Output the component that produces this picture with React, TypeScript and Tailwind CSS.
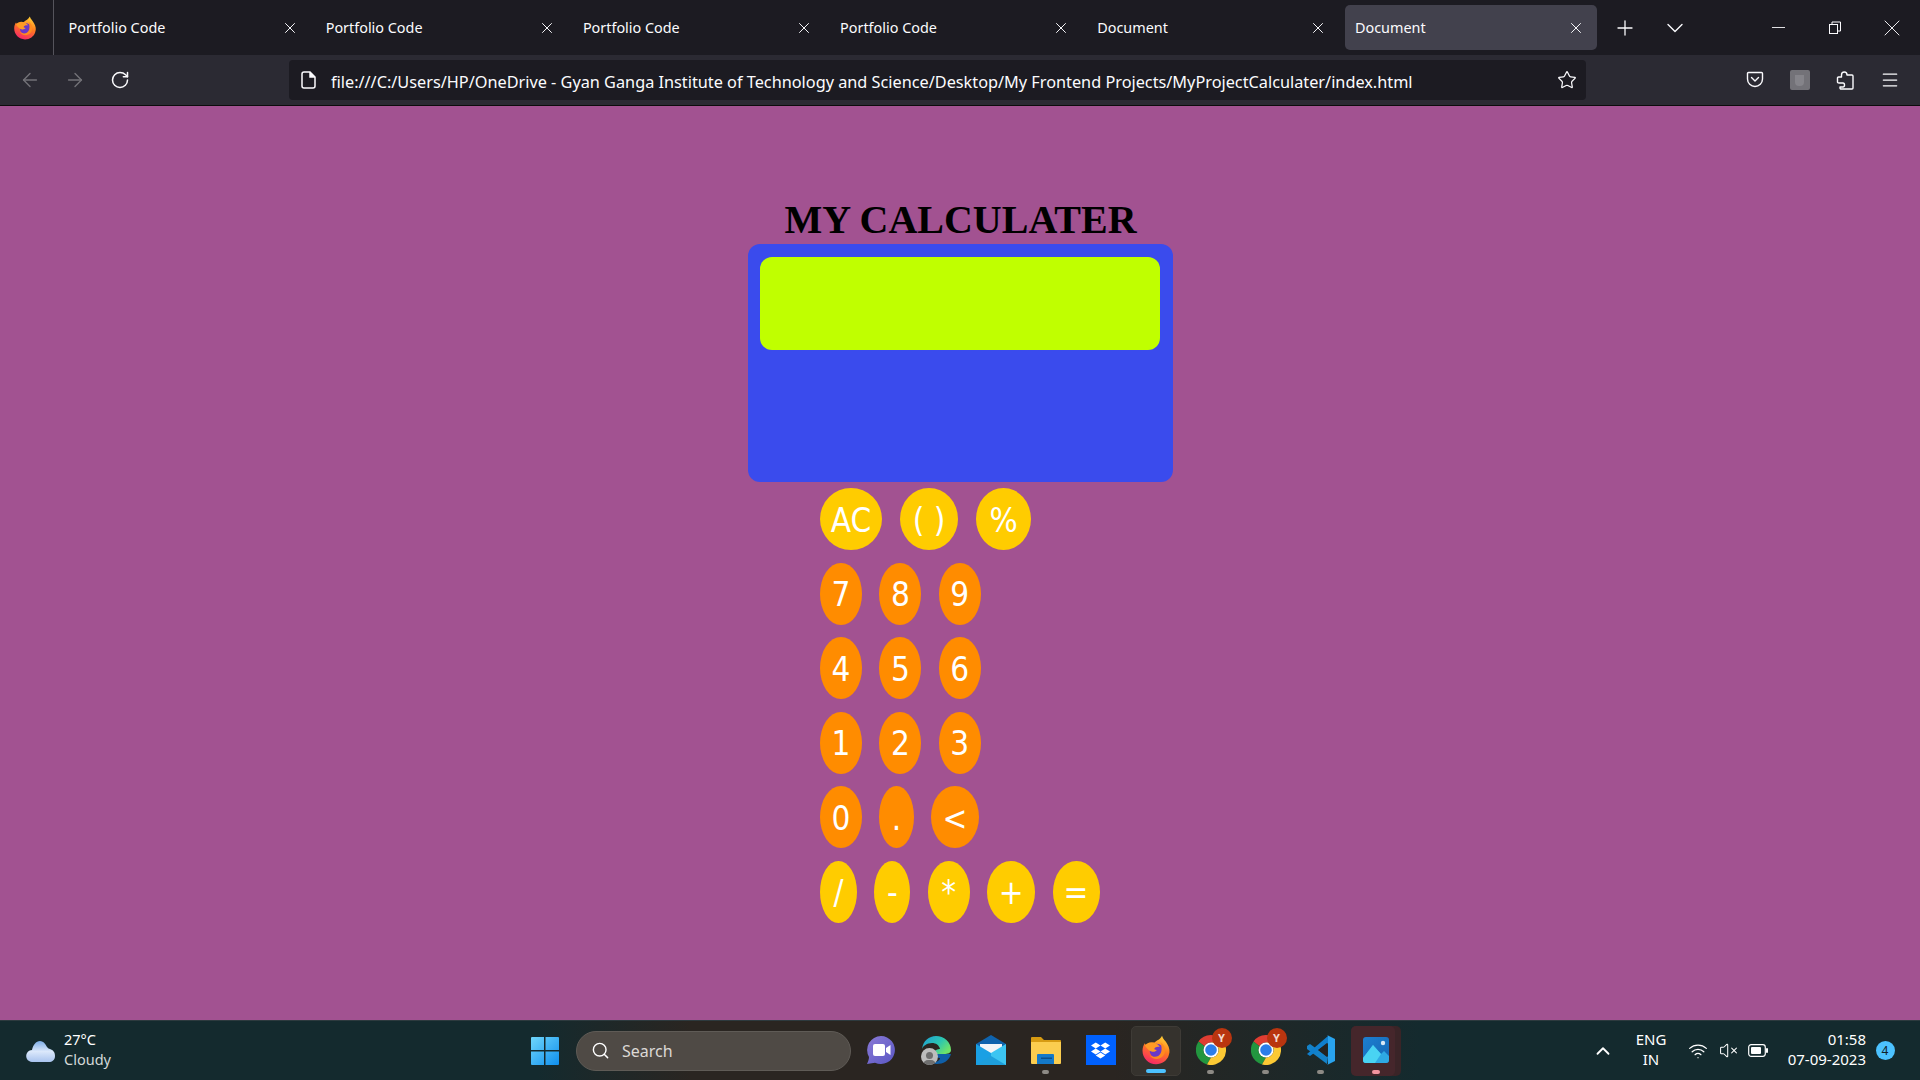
import { ArrowLeft, ArrowRight, ChevronDown, ChevronUp, Menu, Minus, Plus, RotateCw, Search, Star, Wifi, VolumeX, X } from "lucide-react";
import { FaDropbox } from "react-icons/fa";

const tabs = ["Portfolio Code", "Portfolio Code", "Portfolio Code", "Portfolio Code", "Document", "Document"];

const rows = [
  {
    keys: [
      { label: "AC", size: "w-[62px]" },
      { label: "( )", size: "w-[58px]" },
      { label: "%", size: "w-[55px]" },
    ],
    color: "bg-[#ffcc00]",
    gap: "gap-[18px]",
  },
  {
    keys: [
      { label: "7", size: "w-[42px]" },
      { label: "8", size: "w-[42px]" },
      { label: "9", size: "w-[42px]" },
    ],
    color: "bg-[#ff8c00]",
    gap: "gap-[17.4px]",
  },
  {
    keys: [
      { label: "4", size: "w-[42px]" },
      { label: "5", size: "w-[42px]" },
      { label: "6", size: "w-[42px]" },
    ],
    color: "bg-[#ff8c00]",
    gap: "gap-[17.4px]",
  },
  {
    keys: [
      { label: "1", size: "w-[42px]" },
      { label: "2", size: "w-[42px]" },
      { label: "3", size: "w-[42px]" },
    ],
    color: "bg-[#ff8c00]",
    gap: "gap-[17.4px]",
  },
  {
    keys: [
      { label: "0", size: "w-[42px]" },
      { label: ".", size: "w-[35px]" },
      { label: "<", size: "w-[48px]" },
    ],
    color: "bg-[#ff8c00]",
    gap: "gap-[17px]",
  },
  {
    keys: [
      { label: "/", size: "w-[37px]" },
      { label: "-", size: "w-[36px]" },
      { label: "*", size: "w-[42px]" },
      { label: "+", size: "w-[48px]" },
      { label: "=", size: "w-[47px]" },
    ],
    color: "bg-[#ffcc00]",
    gap: "gap-[17.4px]",
  },
];

function FirefoxLogo({ size }: { size: number }) {
  return (
    <svg width={size} height={size} viewBox="0 0 40 40">
      <defs>
        <linearGradient id={`ff${size}`} x1="0.7" y1="0" x2="0.3" y2="1">
          <stop offset="0" stopColor="#ffd035" />
          <stop offset="0.45" stopColor="#ff7a1f" />
          <stop offset="1" stopColor="#f5246a" />
        </linearGradient>
      </defs>
      <path d="M28 1c1 4 5 7 7 11 3 5 4 10 2 15-2 7-9 12-17 12C10 39 2 31 2 21c0-4 1-7 3-10 1 2 2 3 3 4 2-3 6-5 10-5 3-3 8-4 10-9z" fill={`url(#ff${size})`} />
      <circle cx="21" cy="21" r="9.5" fill="#6b38c9" />
      <path d="M5 14c3-4 9-6 14-3 3 1 5 3 6 5-3-1-6 0-7 2-1 1 1 2 3 2-1 2-4 3-7 2-4-1-6-4-9-8z" fill="#ff9a26" />
      <path d="M26 10c4 2 6 6 6 11 0 6-5 11-11 11-4 0-8-2-10-6 3 3 8 4 12 2 4-3 6-8 3-18z" fill="#ff8a1f" />
    </svg>
  );
}

function ChromeLogo() {
  return (
    <svg width="30" height="30" viewBox="0 0 30 30">
      <path d="M15 0a15 15 0 0 1 13 7.5H15a7.5 7.5 0 0 0-6.5 3.75L2.5 6.5A15 15 0 0 1 15 0z" fill="#df3d32" />
      <path d="M2.5 6.5l6 4.75A7.5 7.5 0 0 0 15 22.5L11 29.5A15 15 0 0 1 2.5 6.5z" fill="#22963f" />
      <path d="M28 7.5A15 15 0 0 1 11 29.5l4-7A7.5 7.5 0 0 0 21.5 11.25L15 7.5z" fill="#fcc934" />
      <circle cx="15" cy="15" r="7.5" fill="#fff" />
      <circle cx="15" cy="15" r="5.8" fill="#2b7de9" />
    </svg>
  );
}

function Chrome() {
  return (
    <div className="relative w-[30px] h-[30px]">
      <ChromeLogo />
      <div className="absolute -top-[7px] -right-[6px] w-[20px] h-[20px] rounded-full bg-[#b9350f] flex items-center justify-center text-[11px] font-bold text-[#f2d9cf]">
        Y
      </div>
    </div>
  );
}

function TaskSlot({ children, dot }: { children: React.ReactNode; dot?: boolean }) {
  return (
    <div className="relative w-[55px] h-[50px] flex items-center justify-center pb-[1px]">
      {children}
      {dot && <div className="absolute bottom-[2px] left-[24px] w-[7px] h-[4px] rounded-full bg-[#8d8a85]" />}
    </div>
  );
}

function WindowsLogo() {
  return (
    <svg width="30" height="30" viewBox="0 0 30 30">
      <defs>
        <linearGradient id="win" x1="0" y1="0" x2="1" y2="1">
          <stop offset="0" stopColor="#6fd6fb" />
          <stop offset="1" stopColor="#0f8fee" />
        </linearGradient>
      </defs>
      <path d="M1 2a1 1 0 0 1 1-1h12v13H1zM15.5 1H28a1 1 0 0 1 1 1v12H15.5zM1 15.5h13V29H2a1 1 0 0 1-1-1zM15.5 15.5H29V28a1 1 0 0 1-1 1H15.5z" fill="url(#win)" />
    </svg>
  );
}

function Cloud() {
  return (
    <svg width="31" height="24" viewBox="0 0 31 24">
      <defs>
        <linearGradient id="cloud" x1="0" y1="0" x2="0" y2="1">
          <stop offset="0" stopColor="#7eaee8" />
          <stop offset="0.5" stopColor="#dbe8fb" />
          <stop offset="1" stopColor="#a9c3ee" />
        </linearGradient>
      </defs>
      <path d="M7 23a6 6 0 0 1-5-9c1-2 3-3 5-3 1-5 4-9 8-9 3 0 5 2 7 6 1 1 2 2 3 2 3 1 5 3 5 7s-3 6-6 6z" fill="url(#cloud)" />
    </svg>
  );
}

function ChatIcon() {
  return (
    <svg width="30" height="30" viewBox="0 0 30 30">
      <defs>
        <linearGradient id="chat" x1="0" y1="0" x2="1" y2="1">
          <stop offset="0" stopColor="#8a7ad6" />
          <stop offset="1" stopColor="#5a57c4" />
        </linearGradient>
      </defs>
      <path d="M15 1a14 14 0 1 1-6 26.7L1 29c1-2 2-5 2-7A14 14 0 0 1 15 1z" fill="url(#chat)" />
      <rect x="7" y="9" width="12" height="12" rx="2" fill="#fff" />
      <path d="M20 13l4.5-3v10L20 17z" fill="#fff" />
    </svg>
  );
}

function EdgeIcon() {
  return (
    <div className="relative w-[30px] h-[30px]">
      <svg width="30" height="30" viewBox="0 0 30 30">
        <defs>
          <linearGradient id="edge" x1="0" y1="0" x2="1" y2="0.6">
            <stop offset="0" stopColor="#1e9bd8" />
            <stop offset="0.6" stopColor="#2cc6b0" />
            <stop offset="1" stopColor="#6de36a" />
          </linearGradient>
        </defs>
        <path d="M1 14C2 6 8 1 15 1c8 0 15 6 15 14 0 3-3 4-7 4H13c0-4 4-5 6-5-1-4-4-6-8-6-5 0-9 3-10 6z" fill="url(#edge)" />
        <path d="M13 19h17c-2 7-8 10-14 10-2 0-4-1-5-2 5 1 8-2 8-4-3 0-5-2-6-4z" fill="#0f5fa8" />
      </svg>
      <div className="absolute left-0 bottom-0 w-[17px] h-[17px] rounded-full bg-[#bdbdbd] overflow-hidden flex flex-col items-center justify-end">
        <div className="w-[7px] h-[7px] rounded-full bg-[#6f6f6f] mb-[1px]" />
        <div className="w-[13px] h-[5px] rounded-t-full bg-[#6f6f6f]" />
      </div>
    </div>
  );
}

function MailIcon() {
  return (
    <svg width="30" height="30" viewBox="0 0 30 30">
      <path d="M0 9L15 0l15 9v3H0z" fill="#0f63ad" />
      <path d="M4 9h22v6L15 21 4 15z" fill="#f3f6f8" />
      <path d="M0 9l15 9v12H0z" fill="#1aa0e4" />
      <path d="M30 9L15 18v12h15z" fill="#3cc5f2" />
      <path d="M0 30l15-9 15 9z" fill="#1e9fdc" />
    </svg>
  );
}

function FolderIcon() {
  return (
    <svg width="30" height="30" viewBox="0 0 30 30">
      <path d="M0 3a1 1 0 0 1 1-1h9l3 3h16a1 1 0 0 1 1 1v22H0z" fill="#d79b12" />
      <path d="M0 7h30v21a1 1 0 0 1-1 1H1a1 1 0 0 1-1-1z" fill="#fbcd4f" />
      <path d="M6 29v-9a1 1 0 0 1 1-1h15a1 1 0 0 1 1 1v9z" fill="#1479c9" />
      <rect x="10" y="22.5" width="11" height="1.5" fill="#0b4f8c" />
    </svg>
  );
}

function CodeIcon() {
  return (
    <svg width="30" height="30" viewBox="0 0 30 30">
      <path d="M1 11l3-2 18 13-1 7L1 14z" fill="#1482c9" />
      <path d="M22 1L1 19l3 2L22 8z" fill="#0f7fce" />
      <path d="M21 0l8 4v22l-8 4 1-1V1z" fill="#29a3ee" />
      <path d="M21 8l-9 7 9 7z" fill="#242321" />
    </svg>
  );
}

function PhotosIcon() {
  return (
    <svg width="26" height="26" viewBox="0 0 26 26">
      <defs>
        <linearGradient id="ph" x1="0" y1="0" x2="1" y2="1">
          <stop offset="0" stopColor="#1d7fd0" />
          <stop offset="1" stopColor="#1566b4" />
        </linearGradient>
      </defs>
      <rect width="26" height="26" rx="3" fill="url(#ph)" />
      <path d="M0 21L10 8l8 9 3-3 5 5v4a3 3 0 0 1-3 3H3a3 3 0 0 1-3-3z" fill="#2ea9e4" />
      <path d="M0 23v-2l10-13 8 9-6 9H3a3 3 0 0 1-3-3z" fill="#49d3f3" />
      <circle cx="20" cy="6" r="2.2" fill="#d9e8f5" />
    </svg>
  );
}

function BatteryIcon() {
  return (
    <svg width="20" height="13" viewBox="0 0 20 13" fill="none">
      <rect x="0.7" y="0.7" width="16.6" height="11.6" rx="2.5" stroke="#fff" strokeWidth="1.2" />
      <rect x="3" y="3" width="10" height="7" rx="1" fill="#fff" />
      <rect x="18" y="4" width="2" height="5" rx="1" fill="#fff" />
    </svg>
  );
}

function FileIcon() {
  return (
    <svg width="16" height="18" viewBox="0 0 16 18" fill="none" stroke="#fbfbfe" strokeWidth="1.5">
      <path d="M3 1h6l5 5v9a2 2 0 0 1-2 2H3a2 2 0 0 1-2-2V3a2 2 0 0 1 2-2z" />
      <path d="M9 1v5h5" fill="#fbfbfe" />
    </svg>
  );
}

function PocketIcon() {
  return (
    <svg width="18" height="18" viewBox="0 0 18 18" fill="none" stroke="#fbfbfe" strokeWidth="1.4" strokeLinecap="round" strokeLinejoin="round">
      <path d="M2.5 1.5h13a1 1 0 0 1 1 1V8a7.5 7.5 0 0 1-15 0V2.5a1 1 0 0 1 1-1z" />
      <path d="M5.5 6.5L9 10l3.5-3.5" />
    </svg>
  );
}

function PuzzleIcon() {
  return (
    <svg width="18" height="20" viewBox="0 0 18 20" fill="none" stroke="#fbfbfe" strokeWidth="1.4" strokeLinejoin="round">
      <path d="M11 5h5a1 1 0 0 1 1 1v12a1 1 0 0 1-1 1H5a1 1 0 0 1-1-1v-1h3c2 0 2-4 0-4H3c-1 0-1.500-.5-1.500-1V8a1 1 0 0 1 1-1h3V5C5.500 1 11 1 11 5z" />
    </svg>
  );
}

export default function App() {
  return (
    <div className="w-[1920px] h-[1080px] overflow-hidden flex flex-col font-['Noto_Sans',sans-serif]">
      {/* tab strip */}
      <div className="h-[55px] bg-[#1c1b22] flex text-[#fbfbfe] shrink-0">
        <div className="w-[54px] shrink-0 h-full border-r border-[#55545c] flex items-center justify-center pr-[4px]">
          <FirefoxLogo size={24} />
        </div>
        {tabs.map((tab, i) => (
          <div key={i} className={`h-full py-[5px] shrink-0 ${i === 5 ? "w-[259.6px] pl-[5px] pr-[2.5px]" : "w-[257.2px] px-[2.5px]"}`}>
            <div className={`h-full rounded-[5px] flex items-center justify-between ${i === 5 ? "bg-[#42414d] pl-[10px] pr-[12px]" : "pl-[12px] pr-[10px]"}`}>
              <span className="text-[14.4px] leading-none pt-[2px]">{tab}</span>
              <X size={18} strokeWidth={1.3} />
            </div>
          </div>
        ))}
        <div className="w-[50px] shrink-0 flex items-center justify-center">
          <Plus size={24} strokeWidth={1.3} />
        </div>
        <div className="w-[50px] shrink-0 flex items-center justify-center">
          <ChevronDown size={28} strokeWidth={1.2} />
        </div>
        <div className="ml-[50px] w-[57px] shrink-0 flex items-center justify-center">
          <Minus size={21} strokeWidth={1} />
        </div>
        <div className="w-[57px] shrink-0 flex items-center justify-center">
          <svg width="12" height="14" viewBox="0 0 12 14" fill="none" stroke="#fbfbfe" strokeWidth="1">
            <rect x="0.5" y="3.5" width="8" height="9" />
            <path d="M3 3.500V1h8.500v9H8.500" />
          </svg>
        </div>
        <div className="w-[56px] shrink-0 flex items-center justify-center">
          <X size={28} strokeWidth={0.8} />
        </div>
      </div>

      {/* nav bar */}
      <div className="h-[51px] bg-[#2b2a33] border-b border-[#0c0c0d] flex items-center shrink-0 text-[#fbfbfe]">
        <div className="w-[52px] flex justify-center pl-[8px] text-[#737278]">
          <ArrowLeft size={22} strokeWidth={1.5} />
        </div>
        <div className="w-[45px] flex justify-center text-[#737278]">
          <ArrowRight size={22} strokeWidth={1.5} />
        </div>
        <div className="w-[45px] flex justify-center">
          <RotateCw size={20} strokeWidth={1.8} />
        </div>
        <div className="ml-[147px] w-[1297px] h-[40px] rounded-[4px] bg-[#1c1b22] flex items-center pl-[12px]">
          <FileIcon />
          <span className="ml-[14px] pt-[4px] text-[16.27px] leading-none">
            file:///C:/Users/HP/OneDrive - Gyan Ganga Institute of Technology and Science/Desktop/My Frontend Projects/MyProjectCalculater/index.html
          </span>
          <div className="ml-auto mr-[9px]">
            <Star size={20} strokeWidth={1.5} />
          </div>
        </div>
        <div className="ml-[146px] w-[45px] flex justify-center">
          <PocketIcon />
        </div>
        <div className="w-[45px] flex justify-center">
          <div className="w-[20px] h-[20px] rounded-[2px] bg-[#737278] flex items-center justify-center">
            <div className="w-[9px] h-[11px] rounded-b-[4px] bg-[#85848a]" />
          </div>
        </div>
        <div className="w-[45px] flex justify-center">
          <PuzzleIcon />
        </div>
        <div className="w-[45px] flex justify-center">
          <Menu size={20} strokeWidth={1.5} />
        </div>
      </div>

      {/* page */}
      <div className="flex-1 bg-[#a25291] flex flex-col items-center pl-px pt-[91px]">
        <h1 className="font-['Liberation_Serif',serif] font-bold text-[40px] leading-[46px] mb-[1px] text-black">MY CALCULATER</h1>
        <div className="w-[425px] h-[238px] bg-[#3a4bed] rounded-[12px] pt-[13px] px-[12px]">
          <div className="w-[400px] h-[93px] bg-[#c0ff00] rounded-[12px]" />
        </div>
        <div className="w-[425px] pl-[72px] pt-[6px] flex flex-col gap-[12.6px]">
          {rows.map((row, i) => (
            <div key={i} className={`flex ${row.gap}`}>
              {row.keys.map((key) => (
                <div key={key.label} className={`h-[62px] rounded-[50%] flex items-center justify-center pt-[2px] text-white text-[33px] leading-none font-['DejaVu_Sans_Condensed','DejaVu_Sans',sans-serif] [font-stretch:condensed] ${row.color} ${key.size}`}>
                  {key.label}
                </div>
              ))}
            </div>
          ))}
        </div>
      </div>

      {/* taskbar */}
      <div className="h-[60px] shrink-0 border-t border-[#2d3a3e] flex items-center text-white bg-[linear-gradient(90deg,#142a2e_0%,#142a2e_28%,#2a2521_36%,#2a2521_58%,#142a2e_74%)]">
        <div className="ml-[25px] w-[31px] flex justify-center">
          <Cloud />
        </div>
        <div className="ml-[8px] w-[466px] pb-[2px] text-[14.5px] leading-[19.5px]">
          <div>27°C</div>
          <div className="text-[#d3d8d8]">Cloudy</div>
        </div>
        <WindowsLogo />
        <div className="ml-[16px] w-[275px] h-[40px] rounded-full bg-[#4f4a45] border border-[#5f5b56] flex items-center pl-[14px] text-[#dcd9d5]">
          <Search size={19} strokeWidth={1.8} className="text-white" />
          <span className="ml-[12px] text-[16px] leading-none">Search</span>
        </div>
        <div className="ml-[2px] flex items-center">
          <TaskSlot><ChatIcon /></TaskSlot>
          <TaskSlot><EdgeIcon /></TaskSlot>
          <TaskSlot><MailIcon /></TaskSlot>
          <TaskSlot dot><FolderIcon /></TaskSlot>
          <TaskSlot>
            <div className="w-[30px] h-[30px] bg-[#0061fe] flex items-center justify-center text-white">
              <FaDropbox size={19} />
            </div>
          </TaskSlot>
          <div className="relative w-[50px] h-[50px] mx-[2.5px] rounded-[5px] bg-[#35322d] border border-[#3e3b36] flex items-center justify-center pb-[2px]">
            <FirefoxLogo size={30} />
            <div className="absolute bottom-[2px] left-[14px] w-[20px] h-[4px] rounded-full bg-[#4cc2ff]" />
          </div>
          <TaskSlot dot><Chrome /></TaskSlot>
          <TaskSlot dot><Chrome /></TaskSlot>
          <TaskSlot dot><CodeIcon /></TaskSlot>
          <div className="relative w-[50px] h-[50px] mx-[2.5px] rounded-[5px] bg-[#3a2427] flex items-center justify-center pb-[2px]">
            <div className="absolute left-0 top-0 bottom-0 w-[44px] rounded-[5px] bg-[#45262b]" />
            <div className="relative"><PhotosIcon /></div>
            <div className="absolute bottom-[2px] left-[21px] w-[8px] h-[4px] rounded-full bg-[#f2949f]" />
          </div>
        </div>
        <div className="ml-[187px] w-[26px] flex justify-center">
          <ChevronUp size={22} strokeWidth={2} />
        </div>
        <div className="ml-[13px] w-[44px] text-center pb-[2px] text-[15px] leading-[19.5px]">
          <div>ENG</div>
          <div>IN</div>
        </div>
        <div className="ml-[12px] w-[26px] flex justify-center">
          <Wifi size={20} strokeWidth={1.5} />
        </div>
        <div className="ml-[4px] w-[26px] flex justify-center">
          <VolumeX size={19} strokeWidth={1.3} />
        </div>
        <div className="ml-[4px] w-[26px] flex justify-center">
          <BatteryIcon />
        </div>
        <div className="ml-[10px] w-[85px] text-right pb-[2px] text-[15px] leading-[19.5px]">
          <div>01:58</div>
          <div>07-09-2023</div>
        </div>
        <div className="ml-[9.5px] w-[19px] h-[19px] shrink-0 rounded-full bg-[#4cc2ff] text-[#10202a] text-[12px] flex items-center justify-center">
          4
        </div>
      </div>
    </div>
  );
}
